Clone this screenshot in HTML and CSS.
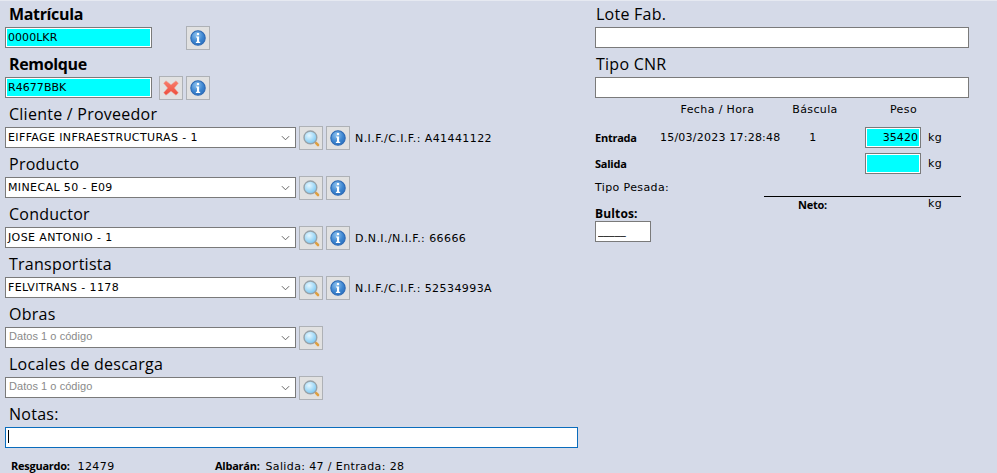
FILE: index.html
```html
<!DOCTYPE html>
<html lang="es">
<head>
<meta charset="utf-8">
<title>Pesada</title>
<link rel="stylesheet" href="styles.css">
</head>
<body>
<svg class="defs" width="0" height="0" aria-hidden="true">
  <defs>
    <radialGradient id="gi" cx="40%" cy="30%" r="75%"><stop offset="0" stop-color="#8fc3ee"/><stop offset=".6" stop-color="#3d86d0"/><stop offset="1" stop-color="#2a6fbe"/></radialGradient>
    <radialGradient id="gl" cx="40%" cy="35%" r="70%"><stop offset="0" stop-color="#e6f7ff"/><stop offset="1" stop-color="#74c6f3"/></radialGradient>
    <linearGradient id="gx" x1="0" y1="0" x2="0" y2="1"><stop offset="0" stop-color="#f8806e"/><stop offset="1" stop-color="#ee4c3a"/></linearGradient>
    <symbol id="info" viewBox="0 0 16 16">
      <circle cx="8" cy="8" r="7.2" fill="url(#gi)" stroke="#2b69b5" stroke-width="1.1"/>
      <rect x="6.9" y="3" width="2.2" height="2.1" fill="#fff"/>
      <path d="M6 6.4h3.1v5.4H10.2v1.2H5.9v-1.2H7V7.6H6z" fill="#fff"/>
    </symbol>
    <symbol id="lupa" viewBox="0 0 17 17">
      <path d="M11.5 11.5l1.5 1.5" stroke="#a3a3a3" stroke-width="2"/>
      <path d="M13.2 13.2l1.8 1.8" stroke="#e0a040" stroke-width="2.6" stroke-linecap="round"/>
      <circle cx="7.4" cy="7.4" r="6.4" fill="url(#gl)" stroke="#98a2a8" stroke-width="1.4"/>
    </symbol>
    <symbol id="equis" viewBox="0 0 16 16">
      <path d="M3 .8L8 4.8l5-4 2.4 2.4-4 4.8 4 4.8-2.4 2.4-5-4-5 4-2.4-2.4 4-4.8-4-4.8z" fill="url(#gx)" stroke="#eab0a5" stroke-width=".5"/>
    </symbol>
  </defs>
</svg>
<main class="page">
  <section class="left">
    <div class="field">
      <div class="label strong">Matrícula</div>
      <div class="row">
        <input class="txt plate" value="0000LKR" aria-label="Matrícula">
        <span class="spacer"></span>
        <button class="btn"><svg class="ico"><use href="#info"/></svg></button>
      </div>
    </div>
    <div class="field">
      <div class="label strong">Remolque</div>
      <div class="row">
        <input class="txt plate" value="R4677BBK" aria-label="Remolque">
        <button class="btn first"><svg class="ico"><use href="#equis"/></svg></button>
        <button class="btn"><svg class="ico"><use href="#info"/></svg></button>
      </div>
    </div>
    <div class="field">
      <div class="label">Cliente / Proveedor</div>
      <div class="row">
        <div class="combo"><span class="val">EIFFAGE INFRAESTRUCTURAS - 1</span><svg class="chev" viewBox="0 0 10 6"><path d="M1 1l4 4 4-4" fill="none" stroke="#555" stroke-width="1"/></svg></div>
        <button class="btn first"><svg class="ico lupa"><use href="#lupa"/></svg></button>
        <button class="btn"><svg class="ico"><use href="#info"/></svg></button>
        <span class="extra">N.I.F./C.I.F.: A41441122</span>
      </div>
    </div>
    <div class="field">
      <div class="label">Producto</div>
      <div class="row">
        <div class="combo"><span class="val">MINECAL 50 - E09</span><svg class="chev" viewBox="0 0 10 6"><path d="M1 1l4 4 4-4" fill="none" stroke="#555" stroke-width="1"/></svg></div>
        <button class="btn first"><svg class="ico lupa"><use href="#lupa"/></svg></button>
        <button class="btn"><svg class="ico"><use href="#info"/></svg></button>
      </div>
    </div>
    <div class="field">
      <div class="label">Conductor</div>
      <div class="row">
        <div class="combo"><span class="val">JOSE ANTONIO - 1</span><svg class="chev" viewBox="0 0 10 6"><path d="M1 1l4 4 4-4" fill="none" stroke="#555" stroke-width="1"/></svg></div>
        <button class="btn first"><svg class="ico lupa"><use href="#lupa"/></svg></button>
        <button class="btn"><svg class="ico"><use href="#info"/></svg></button>
        <span class="extra">D.N.I./N.I.F.: 66666</span>
      </div>
    </div>
    <div class="field">
      <div class="label">Transportista</div>
      <div class="row">
        <div class="combo"><span class="val">FELVITRANS - 1178</span><svg class="chev" viewBox="0 0 10 6"><path d="M1 1l4 4 4-4" fill="none" stroke="#555" stroke-width="1"/></svg></div>
        <button class="btn first"><svg class="ico lupa"><use href="#lupa"/></svg></button>
        <button class="btn"><svg class="ico"><use href="#info"/></svg></button>
        <span class="extra">N.I.F./C.I.F.: 52534993A</span>
      </div>
    </div>
    <div class="field">
      <div class="label">Obras</div>
      <div class="row">
        <div class="combo"><span class="val ph">Datos 1 o código</span><svg class="chev" viewBox="0 0 10 6"><path d="M1 1l4 4 4-4" fill="none" stroke="#555" stroke-width="1"/></svg></div>
        <button class="btn first"><svg class="ico lupa"><use href="#lupa"/></svg></button>
      </div>
    </div>
    <div class="field">
      <div class="label">Locales de descarga</div>
      <div class="row">
        <div class="combo"><span class="val ph">Datos 1 o código</span><svg class="chev" viewBox="0 0 10 6"><path d="M1 1l4 4 4-4" fill="none" stroke="#555" stroke-width="1"/></svg></div>
        <button class="btn first"><svg class="ico lupa"><use href="#lupa"/></svg></button>
      </div>
    </div>
    <div class="field">
      <div class="label">Notas:</div>
      <div class="notes"><span class="caret"></span></div>
    </div>
    <footer class="foot">
      <span class="foot-a"><b>Resguardo:</b> 12479</span>
      <span><b>Albarán:</b> Salida: 47 / Entrada: 28</span>
    </footer>
  </section>

  <section class="right">
    <div class="field">
      <div class="label">Lote Fab.</div>
      <input class="txt wide" aria-label="Lote Fab.">
    </div>
    <div class="field">
      <div class="label">Tipo CNR</div>
      <input class="txt wide" aria-label="Tipo CNR">
    </div>
    <div class="weigh">
      <span class="h c-date">Fecha / Hora</span>
      <span class="h c-bas">Báscula</span>
      <span class="h c-peso">Peso</span>

      <b class="side">Entrada</b>
      <span class="date">15/03/2023 17:28:48</span>
      <span class="one">1</span>
      <input class="txt num" value="35420" aria-label="Peso entrada">
      <span class="kg">kg</span>

      <b class="side">Salida</b>
      <input class="txt num c-in" aria-label="Peso salida">
      <span class="kg">kg</span>
    </div>
    <div class="tipo">Tipo Pesada:</div>
    <div class="neto"><b>Neto:</b><span>kg</span></div>
    <div class="bultos"><b>Bultos:</b><input class="txt bul" value="_____" aria-label="Bultos"></div>
  </section>
</main>
</body>
</html>
```
FILE: styles.css
```css
* { box-sizing: border-box; }
html, body { margin: 0; height: 100%; }
body {
  background: #d5dae8;
  border-top: 1px solid #e6e9f1;
  font: 11px "DejaVu Sans", Verdana, sans-serif;
  letter-spacing: .38px;
  color: #000;
  overflow: hidden;
}
.defs { position: absolute; }
.page { display: flex; align-items: flex-start; }
.left { width: 595px; padding-left: 5px; flex: none; }
.right { width: 374px; flex: none; }

.field { height: 50px; }
.label {
  font: 16px/26px "Open Sans", Tahoma, sans-serif;
  letter-spacing: .25px;
  height: 25px;
  padding-left: 4px;
  color: #000;
  white-space: nowrap;
}
.label.strong { font-weight: 700; letter-spacing: -.35px; }
.right .label { padding-left: 1px; }
.row { display: flex; align-items: flex-start; height: 24px; }

.txt {
  height: 21px;
  border: 1px solid #7a7a7a;
  background: #fff;
  font: 11px "DejaVu Sans", Verdana, sans-serif;
  letter-spacing: .05px;
  color: #000;
  padding: 0 2px;
  margin-top: 1px;
  outline: none;
  display: block;
  border-radius: 0;
}
.plate {
  width: 147px;
  background: #00ffff;
  box-shadow: inset 0 0 0 1px #fff;
}
.spacer { width: 31px; }
.btn {
  width: 24px;
  height: 24px;
  padding: 0;
  margin: 0 0 0 3px;
  border: 1px solid #aeb1b6;
  background: #e1e1e1;
  display: flex;
  align-items: center;
  justify-content: center;
}
.btn.first { margin-left: 7px; }
.combo + .btn.first { margin-left: 3px; }
.ico { width: 16px; height: 16px; display: block; }
.ico.lupa { width: 17px; height: 17px; }
.combo {
  width: 291px;
  height: 21px;
  margin-top: 1px;
  border: 1px solid #7a7a7a;
  background: #fff;
  display: flex;
  align-items: center;
  justify-content: space-between;
  padding: 0 5px 0 2px;
}
.val { font-size: 11px; }
.val.ph {
  font: 11px "Liberation Sans", Arial, sans-serif;
  letter-spacing: .05px;
  color: #8a8a8a;
  padding: 0 0 3px 1px;
}
.chev { width: 9px; height: 6px; display: block; }
.extra { margin-left: 5px; line-height: 26px; letter-spacing: .42px; }

.notes {
  width: 573px;
  height: 21px;
  margin-top: 1px;
  border: 1px solid #0a6cbc;
  background: #fff;
  padding: 2px 2px;
}
.caret { display: block; width: 1px; height: 13px; background: #000; }

.foot {
  display: flex;
  padding-left: 6px;
  margin-top: 7px;
  line-height: 13px;
}
.foot-a { width: 204px; }
.foot b, .weigh b, .neto b { font: 700 11px "Open Sans", Tahoma, sans-serif; letter-spacing: -.25px; }
.foot b { margin-right: 4px; }
.foot span + span b { margin-right: 2px; }

.wide { width: 374px; }

.weigh {
  display: grid;
  grid-template-columns: 65px 115px 80px 10px 56px 1fr;
  align-items: center;
}
.weigh .h { height: 26px; line-height: 18px; text-align: center; align-self: start; }
.h.c-date { grid-column: 2; }
.h.c-bas { grid-column: 3; }
.h.c-peso { grid-column: 5 / 7; text-align: left; padding-left: 25px; }
.side { grid-column: 1; margin-bottom: 5px; }
.date { grid-column: 2; white-space: nowrap; margin-bottom: 5px; letter-spacing: .22px; }
.one { grid-column: 3; text-align: center; padding-right: 4px; margin-bottom: 5px; }
.num {
  grid-column: 5;
  width: 56px;
  text-align: right;
  background: #00ffff;
  box-shadow: inset 0 0 0 1px #fff;
  margin: 0 0 5px;
}
.kg { grid-column: 6; padding-left: 7px; margin-bottom: 5px; }
.tipo { line-height: 18px; }
.neto {
  margin: -1px 0 0 169px;
  width: 197px;
  border-top: 1px solid #000;
  display: flex;
  height: 11px;
  line-height: 13px;
}
.neto b { margin-left: 34px; width: 130px; flex: none; }
.bultos b { display: block; font: 700 12px/14px "Open Sans", Tahoma, sans-serif; letter-spacing: .15px; }
.bul { width: 56px; padding-bottom: 3px; margin-top: 0; }
```
